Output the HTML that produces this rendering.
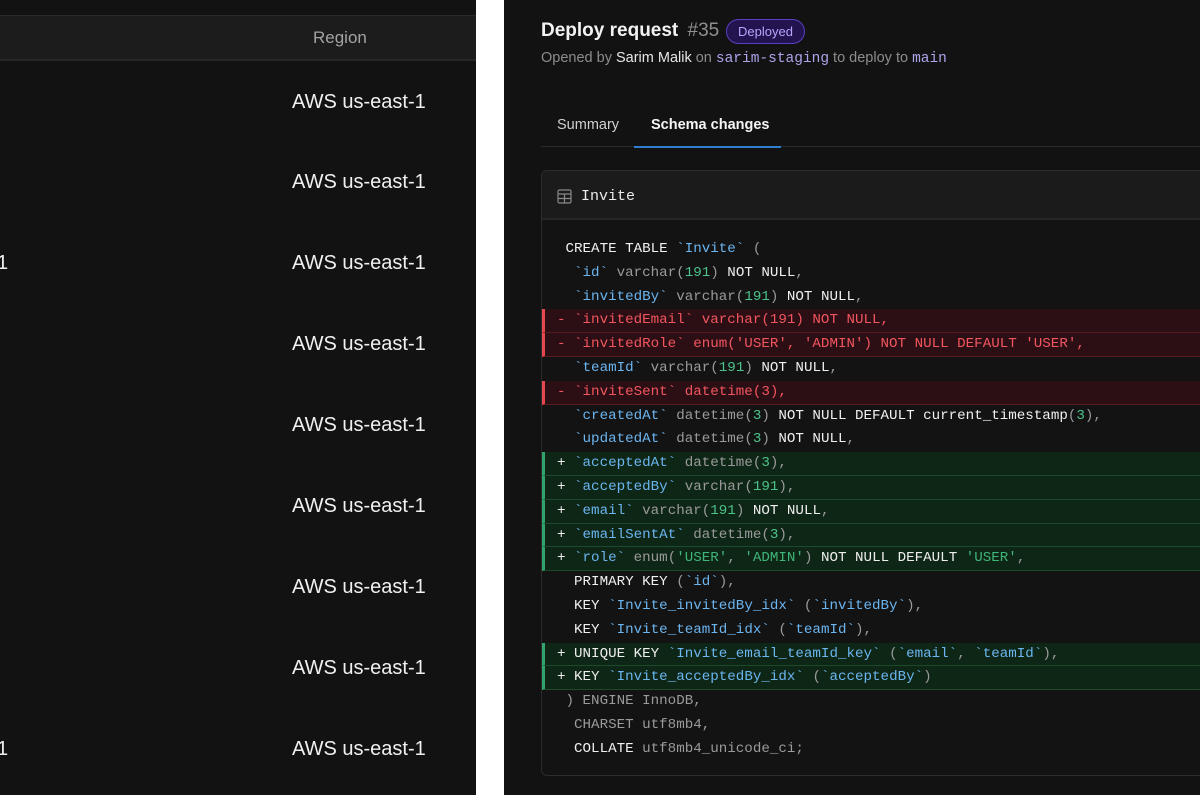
<!DOCTYPE html>
<html><head><meta charset="utf-8"><style>
*{margin:0;padding:0;box-sizing:border-box}
body{width:1200px;height:800px;background:#fff;position:relative;overflow:hidden;font-family:"Liberation Sans",sans-serif}
.lp{position:absolute;left:0;top:0;width:476px;height:795px;background:#121212}
.lh{position:absolute;left:0;top:15px;width:476px;height:46px;background:#1c1c1c;border-top:1px solid #2a2a2a;border-bottom:2px solid #262626}
.lh span{position:absolute;left:313px;top:12px;color:#a3a3a3;font-size:17px}
.aws{position:absolute;left:292px;color:#f0f0f0;font-size:20px;line-height:20px}
.one{position:absolute;left:-3px;color:#f0f0f0;font-size:20px;line-height:20px}
.rp{position:absolute;left:504px;top:0;width:696px;height:795px;background:#121212}
.t{position:absolute;left:541px;top:19px;font-size:19px;font-weight:bold;color:#f2f2f2;line-height:24px}
.t span{font-weight:normal;color:#8f8f8f;margin-left:4px}
.badge{position:absolute;left:726px;top:19px;width:79px;height:25px;border:1px solid #5a3fc0;background:#23144f;border-radius:13px;color:#b8a3ff;font-size:13px;text-align:center;line-height:23px}
.sub{position:absolute;left:541px;top:50px;font-size:14.5px;color:#8c8c8c;white-space:nowrap}
.sub b{font-weight:normal;color:#e6e6e6}
.sub code{font-family:"Liberation Mono",monospace;color:#aba4ea;font-size:14.5px}
.tabline{position:absolute;left:541px;top:146px;width:659px;height:1px;background:#2a2a2a}
.tab{position:absolute;top:117px;font-size:14.5px;color:#d0d0d0}
.ul{position:absolute;left:634px;top:146px;width:147px;height:2px;background:#2f7fd0}
.card{position:absolute;left:541px;top:170px;width:680px;height:606px;border:1px solid #2c2c2c;border-radius:6px;background:#131313;overflow:hidden}
.ch{position:absolute;left:0;top:0;width:100%;height:49px;background:#1b1b1b;border-bottom:2px solid #262626}
.ch span{position:absolute;left:39px;top:17px;font-family:"Liberation Mono",monospace;font-size:15px;color:#ececec}
.code{position:absolute;left:0;top:67px;width:100%;font-family:"Liberation Mono",monospace;font-size:14.2px}
.l{height:23.8px;line-height:23.8px;white-space:pre;padding-left:15px;color:#f0f0f0}
.r{background:#2c0f15;border-left:3px solid #e5484d;padding-left:12px;color:#f2555e;border-bottom:1px solid #5a1a22}
.a{background:#0e2616;border-left:3px solid #30a46c;padding-left:12px;color:#eee;border-bottom:1px solid #1d4a2a}
.b{color:#6bb5f0}.g{color:#9a9a9a}.n{color:#4cc38a}.s{color:#3fb57a}
</style></head><body>
<div class="lp">
<div class="lh"><span>Region</span></div>
<div class="aws" style="top:92px">AWS us-east-1</div>
<div class="aws" style="top:172px">AWS us-east-1</div>
<div class="aws" style="top:253px">AWS us-east-1</div>
<div class="one" style="top:253px">1</div>
<div class="aws" style="top:334px">AWS us-east-1</div>
<div class="aws" style="top:415px">AWS us-east-1</div>
<div class="aws" style="top:496px">AWS us-east-1</div>
<div class="aws" style="top:577px">AWS us-east-1</div>
<div class="aws" style="top:658px">AWS us-east-1</div>
<div class="aws" style="top:739px">AWS us-east-1</div>
<div class="one" style="top:739px">1</div>
</div>
<div class="rp"></div>
<div class="t">Deploy request <span>#35</span></div>
<div class="badge">Deployed</div>
<div class="sub">Opened by <b>Sarim Malik</b> on <code>sarim-staging</code> to deploy to <code>main</code></div>
<div class="tab" style="left:557px">Summary</div>
<div class="tab" style="left:651px;color:#f5f5f5;font-weight:bold">Schema changes</div>
<div class="tabline"></div><div class="ul"></div>
<div class="card">
<div class="ch"><svg style="position:absolute;left:15px;top:18px" width="15" height="15" viewBox="0 0 15 15" fill="none" stroke="#8a8a8a" stroke-width="1.2"><rect x="1" y="1" width="13" height="13" rx="1.5"/><path d="M1 5h13M1 9.5h13M7.5 5v9"/></svg><span>Invite</span></div>
<div class="code">
<div class="l"> CREATE TABLE <span class="b">`Invite`</span> <span class="g">(</span></div>
<div class="l">  <span class="b">`id`</span> <span class="g">varchar(</span><span class="n">191</span><span class="g">)</span> NOT NULL<span class="g">,</span></div>
<div class="l">  <span class="b">`invitedBy`</span> <span class="g">varchar(</span><span class="n">191</span><span class="g">)</span> NOT NULL<span class="g">,</span></div>
<div class="l r">- `invitedEmail` varchar(191) NOT NULL,</div>
<div class="l r">- `invitedRole` enum('USER', 'ADMIN') NOT NULL DEFAULT 'USER',</div>
<div class="l">  <span class="b">`teamId`</span> <span class="g">varchar(</span><span class="n">191</span><span class="g">)</span> NOT NULL<span class="g">,</span></div>
<div class="l r">- `inviteSent` datetime(3),</div>
<div class="l">  <span class="b">`createdAt`</span> <span class="g">datetime(</span><span class="n">3</span><span class="g">)</span> NOT NULL DEFAULT current_timestamp<span class="g">(</span><span class="n">3</span><span class="g">),</span></div>
<div class="l">  <span class="b">`updatedAt`</span> <span class="g">datetime(</span><span class="n">3</span><span class="g">)</span> NOT NULL<span class="g">,</span></div>
<div class="l a">+ <span class="b">`acceptedAt`</span> <span class="g">datetime(</span><span class="n">3</span><span class="g">),</span></div>
<div class="l a">+ <span class="b">`acceptedBy`</span> <span class="g">varchar(</span><span class="n">191</span><span class="g">),</span></div>
<div class="l a">+ <span class="b">`email`</span> <span class="g">varchar(</span><span class="n">191</span><span class="g">)</span> NOT NULL<span class="g">,</span></div>
<div class="l a">+ <span class="b">`emailSentAt`</span> <span class="g">datetime(</span><span class="n">3</span><span class="g">),</span></div>
<div class="l a">+ <span class="b">`role`</span> <span class="g">enum(</span><span class="s">'USER'</span><span class="g">,</span> <span class="s">'ADMIN'</span><span class="g">)</span> NOT NULL DEFAULT <span class="s">'USER'</span><span class="g">,</span></div>
<div class="l">  PRIMARY KEY <span class="g">(</span><span class="b">`id`</span><span class="g">),</span></div>
<div class="l">  KEY <span class="b">`Invite_invitedBy_idx`</span> <span class="g">(</span><span class="b">`invitedBy`</span><span class="g">),</span></div>
<div class="l">  KEY <span class="b">`Invite_teamId_idx`</span> <span class="g">(</span><span class="b">`teamId`</span><span class="g">),</span></div>
<div class="l a">+ UNIQUE KEY <span class="b">`Invite_email_teamId_key`</span> <span class="g">(</span><span class="b">`email`</span><span class="g">,</span> <span class="b">`teamId`</span><span class="g">),</span></div>
<div class="l a">+ KEY <span class="b">`Invite_acceptedBy_idx`</span> <span class="g">(</span><span class="b">`acceptedBy`</span><span class="g">)</span></div>
<div class="l"><span class="g"> ) ENGINE InnoDB,</span></div>
<div class="l"><span class="g">  CHARSET utf8mb4,</span></div>
<div class="l">  COLLATE <span class="g">utf8mb4_unicode_ci;</span></div>
</div>
</div>
</body></html>
